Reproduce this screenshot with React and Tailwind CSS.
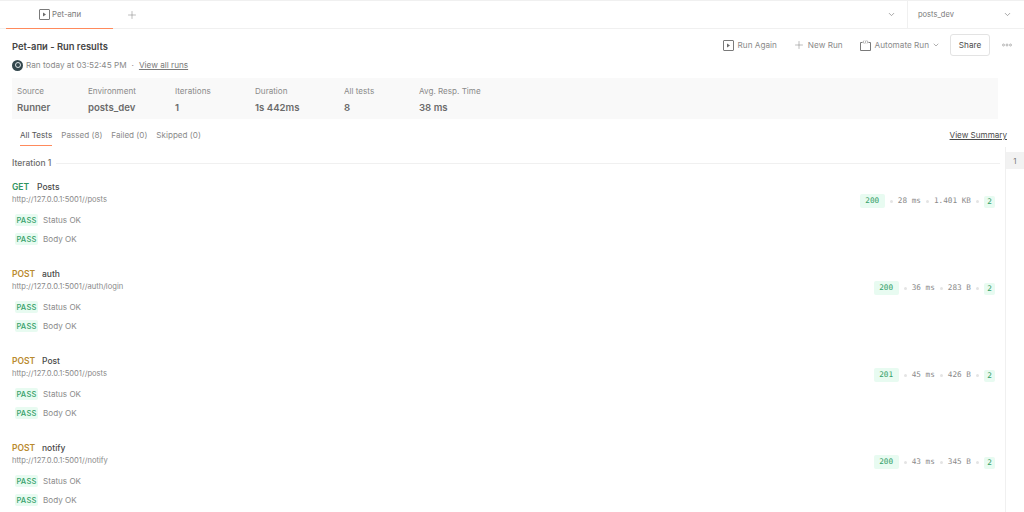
import React from 'react';
import { ChevronDown, Plus } from 'lucide-react';

const stats = [
  { label: 'Source', value: 'Runner', width: 'w-[71px]' },
  { label: 'Environment', value: 'posts_dev', width: 'w-[87px]' },
  { label: 'Iterations', value: '1', width: 'w-[80px]' },
  { label: 'Duration', value: '1s 442ms', width: 'w-[89px]' },
  { label: 'All tests', value: '8', width: 'w-[75px]' },
  { label: 'Avg. Resp. Time', value: '38 ms', width: 'w-[80px]' },
];

const requests = [
  { method: 'GET', name: 'Posts', url: 'http://127.0.0.1:5001//posts', code: '200', time: '28 ms', size: '1.401 KB' },
  { method: 'POST', name: 'auth', url: 'http://127.0.0.1:5001//auth/login', code: '200', time: '36 ms', size: '283 B' },
  { method: 'POST', name: 'Post', url: 'http://127.0.0.1:5001//posts', code: '201', time: '45 ms', size: '426 B' },
  { method: 'POST', name: 'notify', url: 'http://127.0.0.1:5001//notify', code: '200', time: '43 ms', size: '345 B' },
];

const Dot = () => <span className="w-[3px] h-[3px] mx-[5px] rounded-full bg-[#e4e4e4]"></span>;

const PlayBox = () => (
  <svg width="11" height="11" viewBox="0 0 11 11" fill="none" className="shrink-0">
    <rect x="0.5" y="0.5" width="10" height="10" rx="0.5" stroke="#7a7a7a" />
    <path d="M4 3.5l3 2-3 2z" fill="#6b6b6b" />
  </svg>
);

const TestRow = ({ name }) => (
  <div className="flex items-center h-[12px] ml-[3px] mt-[7px] first:mt-0">
    <span className="flex items-center justify-center w-[23px] h-[12px] pt-[1px] rounded-[2px] bg-[#e8fbf1] text-[#35a06a] font-medium text-[7.6px] tracking-[0.2px]">PASS</span>
    <span className="ml-[5px] text-[8.1px] text-[#8a8a8a]">{name}</span>
  </div>
);

const RequestRow = ({ req }) => (
  <div className="h-[87px]">
    <div className="flex justify-between">
      <div>
        <div className="flex items-center h-[12px] text-[8.5px] font-medium">
          <span className={req.method === 'GET' ? 'w-[25px] font-semibold text-[#2f9460]' : 'w-[30px] font-semibold text-[#b98a2e]'}>{req.method}</span>
          <span className="text-[#4a4a4a]">{req.name}</span>
        </div>
        <div className="mt-[1px] h-[11px] leading-[11px] text-[7.6px] text-[#8a8a8a]">{req.url}</div>
      </div>
      <div className="flex items-center h-[14px] mt-[13px] font-['DejaVu_Sans_Mono',monospace] text-[7.7px] text-[#8a8a8a]">
        <span className="flex items-center justify-center w-[25px] h-[14px] rounded-[2px] bg-[#e8fbf1] text-[#35a06a]">{req.code}</span>
        <Dot />
        <span>{req.time}</span>
        <Dot />
        <span>{req.size}</span>
        <Dot />
        <span className="flex items-center justify-center w-[11px] h-[12px] mt-[2px] rounded-[2px] bg-[#e8fbf1] text-[#35a06a]">2</span>
      </div>
    </div>
    <div className="mt-[6px]">
      <TestRow name="Status OK" />
      <TestRow name="Body OK" />
    </div>
  </div>
);

export default function App() {
  return (
    <div className="w-[1024px] h-[512px] overflow-hidden bg-white font-['Inter',sans-serif] flex flex-col">
      {/* top tab strip */}
      <div className="h-[29px] shrink-0 flex border-t border-b border-[#f0f0f0]">
        <div className="ml-[6px] w-[107px] h-[28px] flex items-center pl-[33px] gap-[2px] border-b border-[#ff8a5c] text-[7.8px] text-[#7a7a7a]">
          <PlayBox />
          <span>Pet-апи</span>
        </div>
        <div className="w-[38px] flex items-center justify-center">
          <Plus size={12} strokeWidth={1} color="#7a7a7a" />
        </div>
        <div className="flex-1 flex items-center justify-end pr-[11px]">
          <ChevronDown size={9} color="#8a8a8a" />
        </div>
        <div className="w-[117px] flex items-center justify-between pl-[10px] pr-[12px] border-l border-[#f0f0f0] text-[7.5px] text-[#7a7a7a]">
          <span>posts_dev</span>
          <ChevronDown size={9} color="#8a8a8a" />
        </div>
      </div>

      {/* run header */}
      <div className="h-[49px] shrink-0 flex justify-between pl-[12px] pr-[12px]">
        <div>
          <h1 className="mt-[11px] h-[13px] leading-[13px] text-[9.4px] font-semibold text-[#454545]">Pet-апи - Run results</h1>
          <div className="mt-[6px] flex items-center text-[8.2px] text-[#8a8a8a]">
            <span className="w-[11px] h-[11px] rounded-full bg-[#34474d] flex items-center justify-center">
              <span className="w-[6px] h-[6px] rounded-full border border-[#dfe6e8]"></span>
            </span>
            <span className="ml-[3px]">Ran today at 03:52:45 PM</span>
            <span className="mx-[5px]">·</span>
            <span className="underline text-[#7a7a7a]">View all runs</span>
          </div>
        </div>
        <div className="mt-[5px] h-[22px] flex items-center text-[8.2px] text-[#8a8a8a]">
          <PlayBox />
          <span className="ml-[4px]">Run Again</span>
          <Plus size={12} strokeWidth={1} color="#7a7a7a" className="ml-[16px]" />
          <span className="ml-[3px]">New Run</span>
          <svg width="11" height="11" viewBox="0 0 11 11" fill="none" className="ml-[17px]">
            <path d="M2.5 2.5H0.5v8h10v-8H8.5" stroke="#7a7a7a" />
            <path d="M4 0.5L3 2l1 1.5M7 0.5l1 1.5-1 1.5M5 3.5l1-3" stroke="#7a7a7a" strokeWidth="0.6" />
          </svg>
          <span className="ml-[4px]">Automate Run</span>
          <ChevronDown size={8} className="ml-[3px]" />
          <span className="ml-[10px] w-[40px] h-[22px] flex items-center justify-center rounded-[3px] border border-[#e3e3e3] text-[#4a4a4a]">Share</span>
          <svg width="10" height="4" viewBox="0 0 10 4" fill="none" className="ml-[12px]">
            <circle cx="1.5" cy="2" r="1" stroke="#9a9a9a" strokeWidth="0.7" />
            <circle cx="5" cy="2" r="1" stroke="#9a9a9a" strokeWidth="0.7" />
            <circle cx="8.5" cy="2" r="1" stroke="#9a9a9a" strokeWidth="0.7" />
          </svg>
        </div>
      </div>

      {/* summary */}
      <div className="ml-[12px] w-[986px] h-[41px] shrink-0 bg-[#f9f9f9] flex pl-[5px] pt-[7px]">
        {stats.map((s) => (
          <div key={s.label} className={`${s.width} shrink-0`}>
            <div className="h-[12px] leading-[12px] text-[8.1px] text-[#8a8a8a]">{s.label}</div>
            <div className="mt-[4px] h-[13px] leading-[13px] text-[9.6px] font-semibold text-[#6b6b6b]">{s.value}</div>
          </div>
        ))}
      </div>

      {/* filters */}
      <div className="h-[28px] shrink-0 flex justify-between pl-[20px] pr-[17px] text-[8.1px] text-[#8a8a8a]">
        <div className="flex gap-[9px]">
          <span className="h-[27px] pt-[10px] leading-[12px] border-b border-[#ff8a5c] text-[#555555]">All Tests</span>
          <span className="pt-[10px] leading-[12px]">Passed (8)</span>
          <span className="pt-[10px] leading-[12px]">Failed (0)</span>
          <span className="pt-[10px] leading-[12px]">Skipped (0)</span>
        </div>
        <span className="pt-[10px] leading-[12px] underline text-[#4a4a4a]">View Summary</span>
      </div>

      {/* results */}
      <div className="flex-1 flex min-h-0 overflow-hidden">
        <div className="flex-1 min-w-0 pl-[12px] pr-[5px]">
          <div className="flex items-center h-[12px] mt-[10px] text-[8.5px] font-medium text-[#6b6b6b]">
            <span>Iteration 1</span>
            <span className="flex-1 ml-[5px] border-t border-[#f0f0f0]"></span>
          </div>
          <div className="mt-[12px] pr-[5px]">
            {requests.map((r) => (
              <RequestRow key={r.name} req={r} />
            ))}
          </div>
        </div>
        <div className="w-[19px] shrink-0 border-l border-[#f0f0f0]">
          <div className="mt-[5px] h-[17px] bg-[#f2f2f2] flex items-center justify-center text-[8px] text-[#7a7a7a]">1</div>
        </div>
      </div>
    </div>
  );
}
